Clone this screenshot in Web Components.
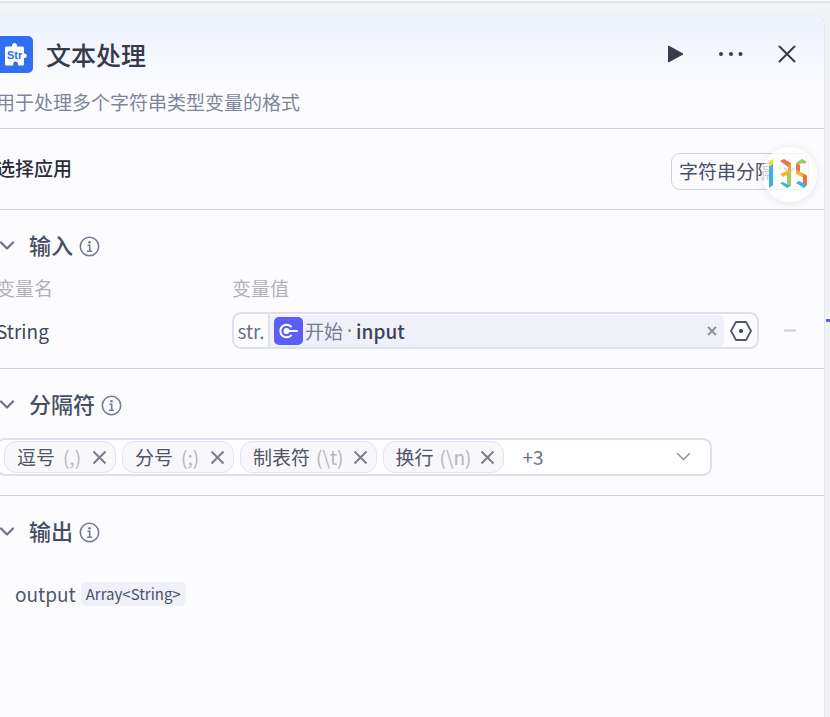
<!DOCTYPE html>
<html lang="zh-CN">
<head>
<meta charset="utf-8">
<title>文本处理</title>
<style>
html{height:100%;background:#f1f2f4}
body{margin:0;min-height:100%;display:flex;overflow-x:hidden;font-family:"Noto Sans CJK SC",sans-serif;font-size:19px;line-height:28px;color:#2f3547}
node-editor{flex:1}
</style>
</head>
<body>
<node-editor>
  <node-header label="文本处理" note="用于处理多个字符串类型变量的格式"></node-header>
  <app-row></app-row>
  <panel-section label="输入"><input-mapping></input-mapping></panel-section>
  <panel-section label="分隔符">
    <tag-select>
      <tag-chip name="逗号" code="(,)"></tag-chip>
      <tag-chip name="分号" code="(;)"></tag-chip>
      <tag-chip name="制表符" code="(\t)"></tag-chip>
      <tag-chip name="换行" code="(\n)"></tag-chip>
    </tag-select>
  </panel-section>
  <panel-section label="输出" last><output-var name="output" type="Array&lt;String&gt;"></output-var></panel-section>
</node-editor>
<script>
const base = `<style>
*,:host{box-sizing:border-box}
button{all:unset;box-sizing:border-box;display:inline-flex;align-items:center;justify-content:center;cursor:pointer;flex:none}
button:focus-visible{outline:2px solid #4d53e8}
svg{display:block;flex:none}
p,h1,h2{margin:0;font-weight:400}
</style>`;
function define(name, render) {
  customElements.define(name, class extends HTMLElement {
    constructor() { super(); this.attachShadow({mode: 'open'}); }
    connectedCallback() { this.shadowRoot.innerHTML = base + render(this); }
  });
}
const esc = s => s.replace(/</g, '&lt;').replace(/>/g, '&gt;');

define('node-editor', () => `<style>
:host{display:flex;flex-direction:column;min-height:100vh;position:relative}
.top{height:15px;flex:none;background:linear-gradient(#f7f8fb 0 1px,#e2e4ee 1px 3px,#f2f3f4 3px)}
main{flex:1;margin:0 5px 0 -24px;background:#fcfcff;border-right:1px solid #e2e4f0;border-top:1px solid #eceff8;border-top-right-radius:10px;overflow:hidden}
.wire{position:absolute;right:0;top:319px;width:4px;height:3px;background:#5a5ff0}
</style><div class="top"></div><main><slot></slot></main><div class="wire"></div>`);

define('node-header', el => `<style>
:host{display:block;padding:20px 28px 12px 20px;border-bottom:1px solid #cdd1e2;background:linear-gradient(#edf2ff,#fcfcff 72px)}
.row{display:flex;align-items:center;height:37px}
h1{flex:1;font-size:25px;line-height:34px;padding-bottom:2px;margin-left:13px;font-weight:500;color:#363a4a}
.tools{display:flex;align-items:center;gap:34px;padding-bottom:1px}
p{margin-top:15px;color:#7d849c}
</style><div class="row">
<svg width="37" height="37" viewBox="0 0 37 37"><rect width="37" height="37" rx="5" fill="#2f6ff3"/><path d="M10.500 10.500h5.700a2.500 2.500 0 1 1 4.600 0h5.700a1.500 1.500 0 0 1 1.500 1.500v5.500a2.300 2.300 0 1 1 0 4.500v6a1.500 1.500 0 0 1-1.500 1.500h-4.500v-1.500a2.400 2.400 0 0 0-4.800 0v1.500h-6.700A1.500 1.500 0 0 1 9 28V12a1.500 1.500 0 0 1 1.500-1.500z" fill="#fff"/><text x="11" y="23" font-family="Liberation Sans" font-size="11" font-weight="700" fill="#2f6ff3">Str</text></svg>
<h1>${el.getAttribute('label')}</h1>
<div class="tools">
<button aria-label="运行"><svg width="17" height="18" viewBox="0 0 17 18"><path d="M1.500 1v16L16 9z" fill="#373b4d" stroke="#373b4d" stroke-linejoin="round"/></svg></button>
<button aria-label="更多"><svg width="26" height="6" viewBox="0 0 26 6" fill="#373b4d"><circle cx="3" cy="3" r="2"/><circle cx="13" cy="3" r="2"/><circle cx="22.500" cy="3" r="2"/></svg></button>
<button aria-label="关闭"><svg width="18" height="18" viewBox="0 0 18 18"><path d="M1.500 1.500l15 15m0-15l-15 15" stroke="#373b4d" stroke-width="2" stroke-linecap="round"/></svg></button>
</div></div><p>${el.getAttribute('note')}</p>`);

define('app-row', () => `<style>
:host{display:flex;align-items:center;justify-content:space-between;position:relative;height:81px;padding:4px 15px 0 20px;border-bottom:1px solid #cdd1e2}
label{font-weight:500;color:#2a2d38;padding-bottom:6px}
.pick{display:grid;align-items:center;justify-items:end}
.pick>*{grid-area:1/1}
.pick svg{margin-right:14px;pointer-events:none}
select{appearance:none;width:138px;height:37px;border:1px solid #cdd0e4;border-radius:9px;background:#fcfcff;font:inherit;color:#4a5064;padding:0 24px 0 7px}
float-badge{position:absolute;right:7px;top:18px}
</style><label for="app">选择应用</label><div class="pick"><select id="app"><option>字符串分隔</option></select><svg width="12" height="8" viewBox="0 0 12 8"><path d="M1 1l5 5 5-5" fill="none" stroke="#7b8196" stroke-width="2"/></svg></div><float-badge></float-badge>`);

define('float-badge', () => `<style>
:host{display:block;width:55px;height:55px;border-radius:50%;background:rgba(255,255,255,.72);box-shadow:0 1px 8px rgba(60,60,90,.12)}
</style><svg width="55" height="55" viewBox="0 0 55 55" role="img" aria-label="135">
<path d="M7 16l4-3v25l-4 3z" fill="#3bb0ea"/><path d="M7 15l4-3v5l-4 3z" fill="#f8d732"/>
<path d="M18 14l4-2 7 4v3l-3 1z" fill="#f0714e"/><path d="M29 17v6l-3 2v-7z" fill="#f29a45"/><path d="M29 22v4l-8 4-3-3z" fill="#f5b82f"/><path d="M25 27l4-2v14l-4 2z" fill="#a0cc5c"/><path d="M18 36l3-1 7 4-3 2z" fill="#3bb0ea"/>
<path d="M35 15l5-3 5 3-3 2-2-1-5 3z" fill="#9ccb5a"/><path d="M34 16l4 2v8l-4-1z" fill="#f0724c"/><path d="M34 23l11 5-1 4-10-5z" fill="#f5b23a"/><path d="M41 27l4 2v9l-4 3z" fill="#ef6b4b"/><path d="M34 36l3-2 8 4-3 3z" fill="#3bb0ea"/></svg>`);

define('panel-section', el => `<style>
:host{display:block;padding:19px 28px 19px 20px;border-bottom:1px solid #cdd1e2}
:host([last]){border-bottom:0}
header{display:flex;align-items:center;height:34px}
h2{font-size:22px;line-height:30px;padding-bottom:4px;font-weight:500;color:#474e63;margin:0 6px 0 12px}
button{width:21px}
</style><header><button aria-label="折叠"><svg width="16" height="10" viewBox="0 0 16 10"><path d="M2 1.500l6 6 6-6" fill="none" stroke="#6b7188" stroke-width="2.200" stroke-linecap="round" stroke-linejoin="round"/></svg></button>
<h2>${el.getAttribute('label')}</h2>
<svg width="21" height="21" viewBox="0 0 21 21" role="img" aria-label="说明"><circle cx="10.500" cy="10.500" r="9.200" fill="none" stroke="#747b93" stroke-width="1.600"/><circle cx="10.500" cy="6.300" r="1.300" fill="#747b93"/><path d="M8.500 9.300h2.200v5.500M8 15.200h5" fill="none" stroke="#747b93" stroke-width="1.600"/></svg></header><slot></slot>`);

define('input-mapping', () => `<style>
:host{display:grid;grid-template-columns:212px 1fr 13px;column-gap:24px;row-gap:10px;align-items:center;margin-top:11px}
.h{color:#b0b1b8}
.v{grid-column:2/4}
.name{color:#42485a}
.field{display:flex;height:37px;border:2px solid #dde0ec;border-radius:9px;align-items:center;background:#fcfcff}
.type{width:36px;align-self:stretch;border-right:2px solid #dde0ec;display:flex;align-items:center;justify-content:center;color:#6a7087}
.value{flex:1;display:flex;align-items:center;height:32px;background:#f0f0f9;border-radius:0 5px 5px 0;padding:0 6px 0 4px;color:#747b92}
.value b{font-weight:500;color:#3d4357;flex:1}
.value i{font:19px/28px "Noto Sans",sans-serif;margin:0 4px}
.value svg.s{margin-right:2px}
.hex{width:33px}
</style><span class="h">变量名</span><span class="h v">变量值</span>
<span class="name">String</span>
<div class="field"><span class="type">str.</span><div class="value"><svg class="s" width="29" height="28" viewBox="0 0 29 28"><rect width="29" height="28" rx="5" fill="#5b5ff8"/><path d="M17 9.500a6.300 6.300 0 1 0 0 9" fill="none" stroke="#fff" stroke-width="2" stroke-linecap="round"/><circle cx="12.500" cy="14" r="3" fill="#fff"/><path d="M13 14h10" stroke="#fff" stroke-width="2" stroke-linecap="round"/></svg><span>开始</span><i>·</i><b>input</b><button aria-label="清除"><svg width="12" height="12" viewBox="0 0 12 12"><path d="M2 2l8 8m0-8l-8 8" stroke="#8b8e9c" stroke-width="1.800"/></svg></button></div><button class="hex" aria-label="选择变量"><svg width="22" height="20" viewBox="0 0 22 20"><path d="M6 1h10l5 9-5 9H6l-5-9z" fill="none" stroke="#50576a" stroke-width="1.800" stroke-linejoin="round"/><circle cx="11" cy="10" r="2" fill="#373b4d"/></svg></button></div>
<button aria-label="删除"><svg width="14" height="3" viewBox="0 0 14 3"><path d="M1 1.500h12" stroke="#c9ccd9" stroke-width="2"/></svg></button>`);

define('tag-select', () => `<style>
:host{display:flex;align-items:center;gap:6px;height:38px;margin:16px 84px 0 0;padding:0 19px 0 6px;border:2px solid #dde0ec;border-radius:9px;background:#fff}
.more{margin-left:12px;flex:1;color:#6a6f80}
</style><slot></slot><span class="more">+3</span><button aria-label="展开选项"><svg width="15" height="10" viewBox="0 0 15 10"><path d="M1.500 1.500l6 6 6-6" fill="none" stroke="#9698a3" stroke-width="1.600" stroke-linecap="round"/></svg></button>`);

define('tag-chip', el => `<style>
:host{display:flex;align-items:center;height:32px;border:1px solid #e2e4f1;border-radius:12px;background:#f8f8fb;padding:0 8px 0 12px;color:#50536a;white-space:nowrap}
span{color:#b5b6bd;margin:0 9px 0 6px;min-width:22px;text-align:center}
</style>${el.getAttribute('name')}<span>${el.getAttribute('code')}</span><button aria-label="移除${el.getAttribute('name')}"><svg width="15" height="15" viewBox="0 0 15 15"><path d="M1.500 1.500l12 12m0-12l-12 12" stroke="#7b7e8b" stroke-width="2"/></svg></button>`);

define('output-var', el => `<style>
:host{display:flex;align-items:center;gap:5px;margin:31px 0 0 19px;color:#50576b}
span{background:#f0f0f8;border-radius:5px;font-size:15px;line-height:24px;padding:0 5px;color:#4a5064}
</style>${el.getAttribute('name')}<span>${esc(el.getAttribute('type'))}</span>`);
</script>
</body>
</html>
